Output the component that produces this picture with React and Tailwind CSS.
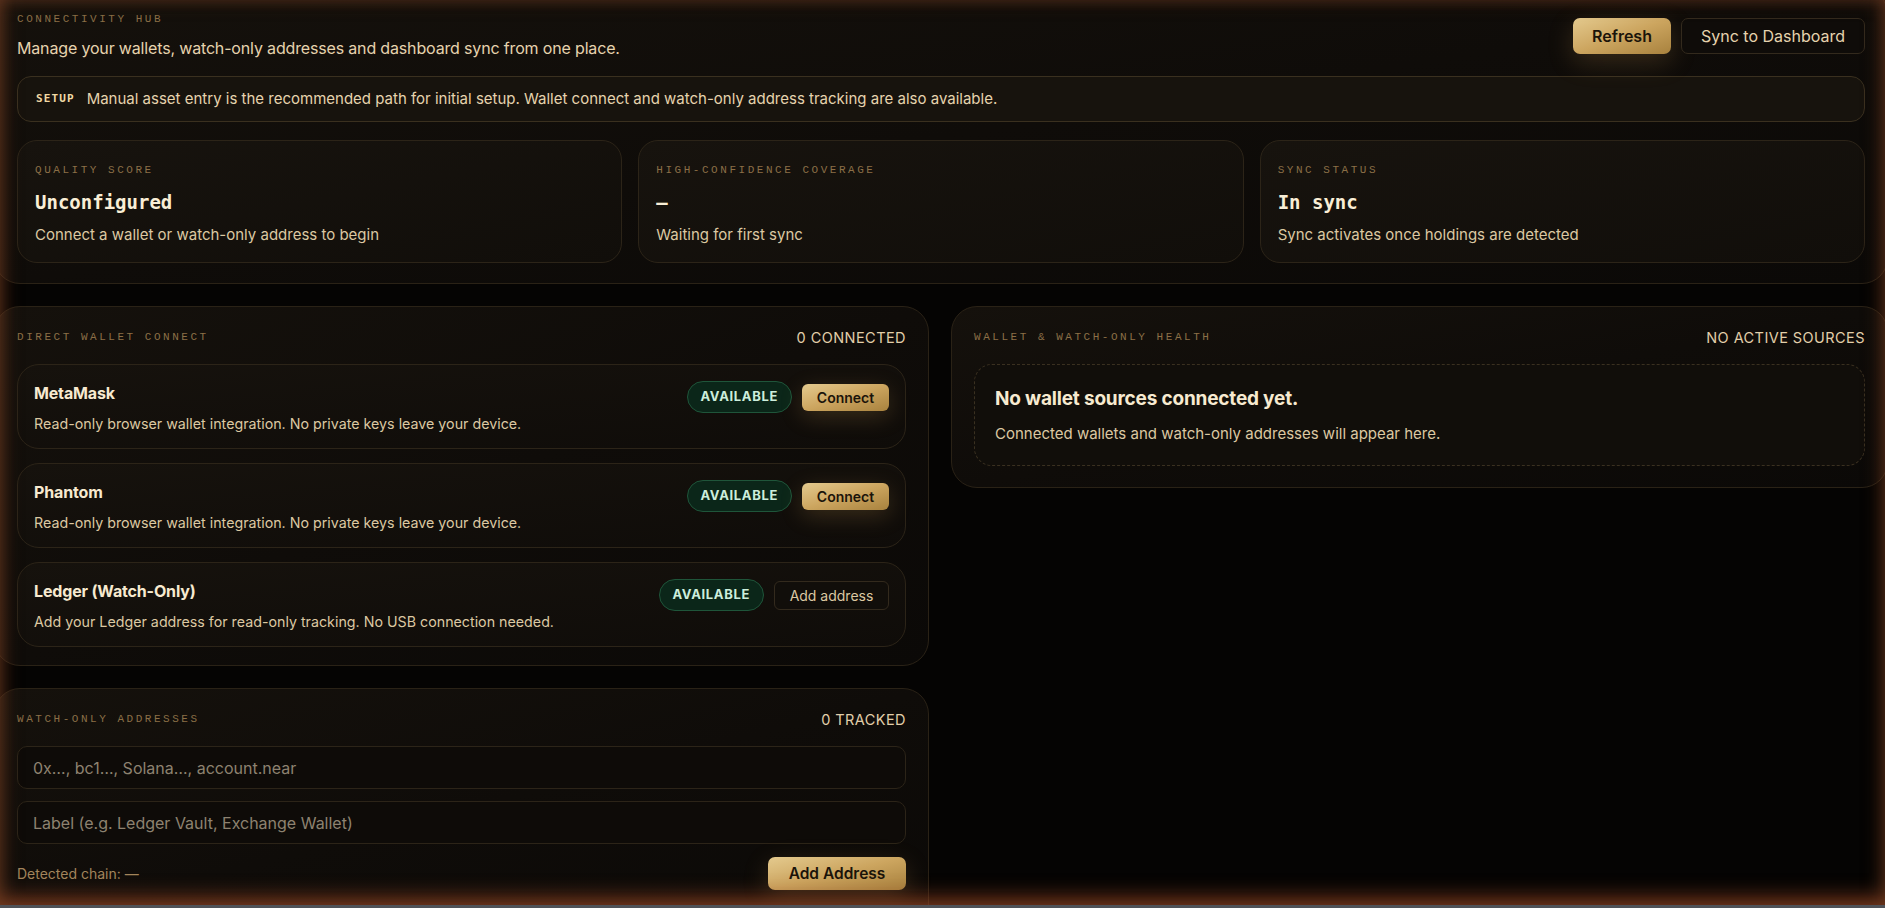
import { useState } from "react";

const gold =
  "bg-linear-to-br from-[#e4ca8e] via-[#cca55f] to-[#a8823e] text-[#1b140a] font-semibold";

function Label({ children }) {
  return (
    <p className="font-['Liberation_Mono',monospace] text-[11px] uppercase leading-4 tracking-[0.23em] text-[#8b6f47]">
      {children}
    </p>
  );
}

function StatCard({ label, value, desc }) {
  return (
    <div className="rounded-[20px] border border-[#2c2418] bg-linear-to-br from-[#17130e] to-[#110e0a] px-[17px] pt-[21px] pb-[17px]">
      <Label>{label}</Label>
      <p className="mt-[10px] font-['DejaVu_Sans_Mono',monospace] text-[19px] font-bold leading-[28px] text-[#f9eed6]">
        {value}
      </p>
      <p className="mt-[9px] text-[15px] leading-5 text-[#dcc8a2]">{desc}</p>
    </div>
  );
}

function WalletCard({ name, desc, action, primary }) {
  return (
    <div className="rounded-[22px] border border-[#2c2418] bg-linear-to-br from-[#16120d] to-[#0f0c09] px-4 pt-[16px] pb-[14px]">
      <div className="flex items-start justify-between">
        <p className="text-[16px] font-bold leading-6 tracking-[-0.01em] text-[#f7ead0]">{name}</p>
        <div className="flex items-center gap-[10px]">
          <span className="flex h-[32px] items-center rounded-full border border-[#1f553a] bg-[#0b2619] px-[13px] text-[13px] font-bold tracking-[0.05em] text-[#cdeedc]">
            AVAILABLE
          </span>
          {primary ? (
            <button className={`h-[27px] w-[87px] rounded-[6px] text-[14px] shadow-[0_6px_22px_rgba(200,150,80,0.22)] ${gold}`}>
              {action}
            </button>
          ) : (
            <button className="h-[29px] w-[115px] rounded-[6px] border border-[#332a1d] bg-[#110e0a] text-[14px] text-[#dcc8a2]">
              {action}
            </button>
          )}
        </div>
      </div>
      <p className="mt-[1px] text-[14.25px] leading-5 text-[#dcc8a2]">{desc}</p>
    </div>
  );
}

function PanelHead({ label, right }) {
  return (
    <div className="flex h-5 items-center justify-between">
      <Label>{label}</Label>
      <span className="pt-[2px] text-[14.5px] uppercase tracking-[0.03em] text-[#e2cfaa]">{right}</span>
    </div>
  );
}

const panel =
  "rounded-[26px] border border-[#2a2216] bg-linear-to-br from-[#15110c] via-[#0f0c09] to-[#0b0907]";

export default function App() {
  const [address, setAddress] = useState("");
  const [label, setLabel] = useState("");

  return (
    <div className="relative h-[908px] w-full overflow-hidden bg-[#050403] font-['Inter',sans-serif]">
      <div className="h-[905px] overflow-hidden">
        <div className="-mt-[12px] -ml-[6px] flex w-[1894px] flex-col gap-[22px]">
          {/* connectivity hub */}
          <div className={`${panel} px-[22px] pt-[22px] pb-[20px]`}>
            <div className="flex items-center justify-between">
              <div className="flex flex-col gap-[9px]">
                <Label>Connectivity Hub</Label>
                <p className="text-[16px] leading-6 tracking-[-0.01em] text-[#e6d3ae]">
                  Manage your wallets, watch-only addresses and dashboard sync from one place.
                </p>
              </div>
              <div className="flex items-center gap-[10px]">
                <button className={`h-[36px] rounded-[7px] px-[19px] text-[16px] shadow-[0_8px_26px_rgba(200,150,80,0.22)] ${gold}`}>
                  Refresh
                </button>
                <button className="h-[36px] rounded-[7px] border border-[#332a1d] bg-[#0f0c09] px-[19px] text-[16px] text-[#e6d3ae]">
                  Sync to Dashboard
                </button>
              </div>
            </div>

            <div className="mt-[16px] flex items-center gap-[12px] rounded-[14px] border border-[#3a301f] bg-[#17130d] px-[18px] py-[12px]">
              <span className="font-['DejaVu_Sans_Mono',monospace] text-[11px] font-bold tracking-[0.1em] text-[#f1d9a4]">
                SETUP
              </span>
              <span className="text-[15px] leading-5 text-[#e6d3ae]">
                Manual asset entry is the recommended path for initial setup. Wallet connect and watch-only address tracking are also available.
              </span>
            </div>

            <div className="mt-[18px] grid grid-cols-3 gap-4">
              <StatCard label="Quality Score" value="Unconfigured" desc="Connect a wallet or watch-only address to begin" />
              <StatCard label="High-Confidence Coverage" value="—" desc="Waiting for first sync" />
              <StatCard label="Sync Status" value="In sync" desc="Sync activates once holdings are detected" />
            </div>
          </div>

          <div className="grid grid-cols-[935px_1fr] items-start gap-[22px]">
            <div className="flex flex-col gap-[22px]">
              {/* direct wallet connect */}
              <div className={`${panel} px-[22px] pt-[20px] pb-[18px]`}>
                <PanelHead label="Direct Wallet Connect" right="0 Connected" />
                <div className="mt-[17px] flex flex-col gap-[14px]">
                  <WalletCard
                    name="MetaMask"
                    desc="Read-only browser wallet integration. No private keys leave your device."
                    action="Connect"
                    primary
                  />
                  <WalletCard
                    name="Phantom"
                    desc="Read-only browser wallet integration. No private keys leave your device."
                    action="Connect"
                    primary
                  />
                  <WalletCard
                    name="Ledger (Watch-Only)"
                    desc="Add your Ledger address for read-only tracking. No USB connection needed."
                    action="Add address"
                  />
                </div>
              </div>

              {/* watch-only addresses */}
              <div className={`${panel} px-[22px] pt-[20px] pb-[40px]`}>
                <PanelHead label="Watch-Only Addresses" right="0 Tracked" />
                <div className="mt-[17px] flex flex-col gap-[12px]">
                  <input
                    value={address}
                    onChange={(e) => setAddress(e.target.value)}
                    placeholder="0x…, bc1…, Solana…, account.near"
                    className="h-[43px] rounded-[10px] border border-[#2c2418] bg-[#0e0b08] px-[15px] text-[16px] text-[#e6d3ae] outline-none placeholder:text-[#8d8270]"
                  />
                  <input
                    value={label}
                    onChange={(e) => setLabel(e.target.value)}
                    placeholder="Label (e.g. Ledger Vault, Exchange Wallet)"
                    className="h-[43px] rounded-[10px] border border-[#2c2418] bg-[#0e0b08] px-[15px] text-[16px] text-[#e6d3ae] outline-none placeholder:text-[#8d8270]"
                  />
                  <div className="flex items-center justify-between pt-[1px]">
                    <span className="text-[14px] text-[#a3855c]">Detected chain: —</span>
                    <button className={`h-[33px] w-[138px] rounded-[7px] text-[15.5px] shadow-[0_8px_26px_rgba(200,150,80,0.22)] ${gold}`}>
                      Add Address
                    </button>
                  </div>
                </div>
              </div>
            </div>

            {/* health */}
            <div className={`${panel} px-[22px] pt-[20px] pb-[21px]`}>
              <PanelHead label="Wallet & Watch-Only Health" right="No Active Sources" />
              <div className="mt-[17px] rounded-[18px] border border-dashed border-[#3a3020] bg-[#110e0a] px-[20px] pt-[20px] pb-[21px]">
                <p className="text-[19px] font-bold leading-7 tracking-[-0.01em] text-[#f7ead0]">
                  No wallet sources connected yet.
                </p>
                <p className="mt-[11px] text-[15px] leading-5 text-[#dcc8a2]">
                  Connected wallets and watch-only addresses will appear here.
                </p>
              </div>
            </div>
          </div>
        </div>
      </div>
      <div className="h-[3px] bg-[#4f5258]" />
      <div className="pointer-events-none absolute inset-x-0 top-0 h-[905px] shadow-[inset_12px_0_18px_-8px_rgba(110,60,35,0.55),inset_-12px_0_18px_-8px_rgba(110,60,35,0.55),inset_0_-16px_20px_-8px_rgba(160,75,40,0.7),inset_0_12px_16px_-8px_rgba(90,50,30,0.45)]" />
    </div>
  );
}
